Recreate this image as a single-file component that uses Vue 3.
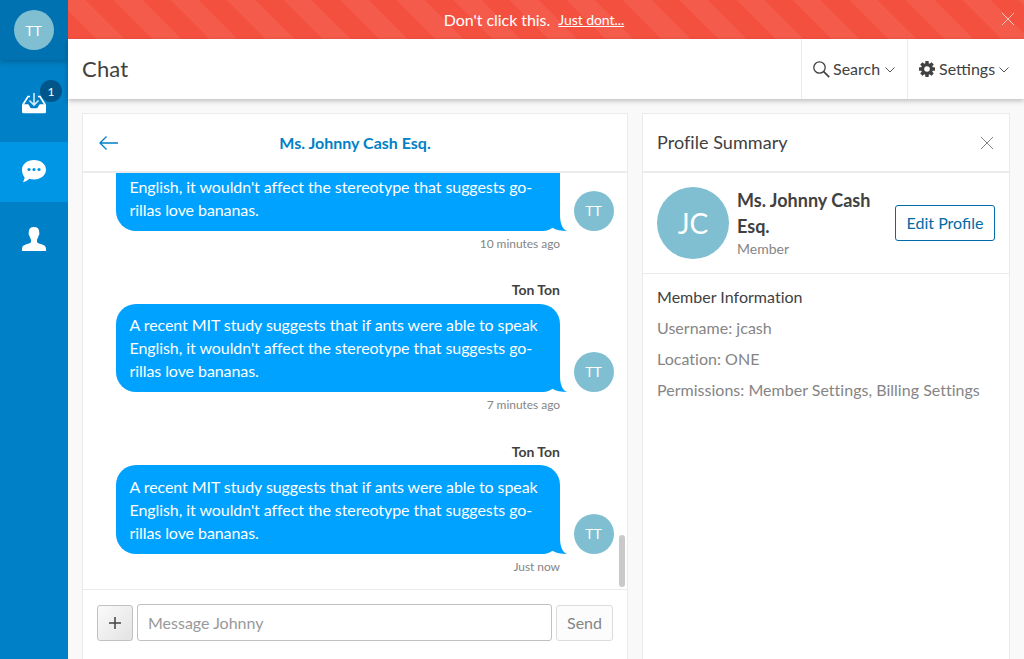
<script setup>
import { ref } from 'vue'

const body = "A recent MIT study suggests that if ants were able to speak English, it wouldn't affect the stereotype that suggests go\u00adrillas love bananas."
const messages = ref([
  { id: 1, time: '10 minutes ago' },
  { id: 2, time: '7 minutes ago' },
  { id: 3, time: 'Just now' },
])
</script>

<template>
  <div class="app">
    <nav class="sidebar">
      <div class="me"><span class="avatar">TT</span></div>
      <a class="nav inbox">
        <svg width="24" height="24" viewBox="0 0 24 24" fill="none">
          <path d="M8 4.500H6L1 12.500M16 4.500h2l5 8" stroke="#fff" stroke-width="1.700" />
          <path d="M0 12.200h6c1.200 0 1.700 4 3.500 4h5c1.800 0 2.300-4 3.500-4h6V20a1.200 1.200 0 0 1-1.200 1.200H1.200A1.200 1.200 0 0 1 0 20z" fill="#fff" />
          <path d="M12 1v11.500M7.500 8.500 12 13l4.500-4.500" stroke="#d5eaf6" stroke-width="1.600" />
        </svg>
        <span class="badge">1</span>
      </a>
      <a class="nav active">
        <svg width="24" height="24" viewBox="0 0 24 24">
          <path d="M12 0c6.700 0 12 4.200 12 9.700s-5.300 9.700-12 9.700c-1.800 0-3.300-.2-4.800-.7C5.600 20.400 3.200 21.800.8 22.200c1.100-1.400 1.800-3.300 1.700-5C.8 15 0 12.500 0 9.700 0 4.200 5.300 0 12 0z" fill="#fff" />
          <circle cx="7" cy="9.500" r="1.600" fill="#0096e6" />
          <circle cx="12" cy="9.500" r="1.600" fill="#0096e6" />
          <circle cx="17" cy="9.500" r="1.600" fill="#0096e6" />
        </svg>
      </a>
      <a class="nav person">
        <svg width="24" height="24" viewBox="0 0 24 24">
          <path d="M12 0c3.500 0 5.200 1.700 5.200 5 0 .9.300 1.100.1 2.300-.2 1.100-.8 1.200-1 2.200-.3 1.700-1.300 2.600-1.300 3.300v2c0 1.200 2 1.700 4.500 2.400 2.700.8 4.500 1.700 4.500 4.300V24H0v-2.500c0-2.600 1.800-3.500 4.500-4.300C7 16.500 9 16 9 14.800v-2c0-.7-1-1.600-1.300-3.300-.2-1-.8-1.100-1-2.200C6.500 6.100 6.800 5.900 6.800 5 6.800 1.700 8.500 0 12 0z" fill="#fff" />
        </svg>
      </a>
    </nav>

    <div class="main">
      <div class="alert">
        <span>Don't click this.</span>
        <a class="alert-link">Just dont...</a>
        <svg class="alert-close" width="12" height="12" viewBox="0 0 12 12"><path d="M0 0 12 12M12 0 0 12" stroke="#fff" stroke-opacity=".65" /></svg>
      </div>

      <header class="topbar">
        <h1>Chat</h1>
        <div class="menu search">
          <svg width="17" height="17" viewBox="0 0 17 17" fill="none" stroke="#414141"><circle cx="6.500" cy="6.500" r="5.700" stroke-width="1.300" /><path d="M10.700 10.700 16.200 16.200" stroke-width="1.700" /></svg>
          <span>Search</span>
          <svg class="chev" width="10" height="6" viewBox="0 0 10 6" fill="none"><path d="M.5.5 5 5 9.500.5" stroke="#555" /></svg>
        </div>
        <div class="menu settings">
          <svg width="16" height="16" viewBox="-8 -8 16 16">
            <g fill="#414141">
              <rect v-for="n in 4" :key="n" x="-1.700" y="-8" width="3.400" height="16" rx=".5" :transform="`rotate(${n * 45})`" />
              <circle r="6" />
            </g>
            <circle r="2.800" fill="#fff" />
          </svg>
          <span>Settings</span>
          <svg class="chev" width="10" height="6" viewBox="0 0 10 6" fill="none"><path d="M.5.5 5 5 9.500.5" stroke="#555" /></svg>
        </div>
      </header>

      <div class="content">
        <section class="card chat">
          <div class="card-head chat-head">
            <svg class="back" width="19" height="14" viewBox="0 0 19 14" fill="none" stroke="#0080c5" stroke-width="1.300"><path d="M1 7h18M7.500.5 1 7l6.500 6.500" /></svg>
            <h2>Ms. Johnny Cash Esq.</h2>
          </div>
          <div class="thread">
            <article v-for="m in messages" :key="m.id" class="message">
              <div class="author">Ton Ton</div>
              <div class="row">
                <div class="bubble">
                  {{ body }}
                  <svg class="tail" width="24" height="17" viewBox="0 0 24 17">
                    <path d="M17 0C17 8 18.500 14.500 24 17H0C4 17 7 15.500 9.500 14L17 0z" fill="#00a2ff" />
                    <path d="M0 17.500V17c4 0 7-1.500 9.500-3.300C13 15.900 18 16.900 24 17v.5z" fill="#fff" />
                  </svg>
                </div>
                <span class="avatar">TT</span>
              </div>
              <div class="time">{{ m.time }}</div>
            </article>
            <i class="scroll" />
          </div>
          <div class="composer">
            <button class="plus" aria-label="Add"><svg width="12" height="12" viewBox="0 0 12 12"><path d="M6 0v12M0 6h12" stroke="#414141" stroke-width="1.500" /></svg></button>
            <input placeholder="Message Johnny">
            <button class="send">Send</button>
          </div>
        </section>

        <aside class="card profile">
          <div class="card-head profile-head">
            <h2>Profile Summary</h2>
            <svg width="12" height="12" viewBox="0 0 12 12"><path d="M0 0 12 12M12 0 0 12" stroke="#858585" /></svg>
          </div>
          <div class="person-row">
            <span class="avatar large">JC</span>
            <div class="who">
              <h3>Ms. Johnny Cash Esq.</h3>
              <p>Member</p>
            </div>
            <button class="edit">Edit Profile</button>
          </div>
          <div class="info">
            <h4>Member Information</h4>
            <p>Username: jcash</p>
            <p>Location: ONE</p>
            <p>Permissions: Member Settings, Billing Settings</p>
          </div>
        </aside>
      </div>
    </div>
  </div>
</template>

<style>
body { background: #f9f9f9; overflow: hidden; }
</style>

<style scoped>
* { box-sizing: border-box; }
.app { display: flex; width: 1024px; height: 659px; overflow: hidden; font: 16px/23px Lato, sans-serif; color: #414141; }
h1, h2, h3, h4, p { margin: 0; font-weight: 400; }
svg { display: block; flex: none; }
button, input { font: inherit; }

.sidebar { width: 68px; background: #0080c6; flex: none; }
.me { height: 60px; display: flex; align-items: center; justify-content: center; background: #0072b1; box-shadow: 0 1px 6px rgba(0, 0, 0, .3); }
.avatar { display: flex; align-items: center; justify-content: center; flex: none; width: 40px; height: 40px; border-radius: 50%; background: #80bfd2; color: #fff; font-size: 14px; line-height: 20px; }
.me .avatar { padding: 1px 1px 0 0; }
.row .avatar { padding-right: 1px; }
.nav { position: relative; display: flex; align-items: center; justify-content: center; height: 60px; }
.inbox { margin: 14px 0 8px; }
.active { background: #0096e6; }
.person { margin-top: 7px; }
.badge { position: absolute; left: 40px; top: 6px; width: 22px; height: 22px; border-radius: 50%; background: #00558a; color: #fff; font-size: 12px; line-height: 23px; text-align: center; }

.main { flex: 1; min-width: 0; display: flex; flex-direction: column; background: #f9f9f9; }
.alert { position: relative; flex: none; display: flex; align-items: center; justify-content: center; gap: 8px; height: 39px; padding-right: 24px; color: #fff; background: repeating-linear-gradient(45deg, #f45040 0 20px, #f45b4a 20px 40px); }
.alert span { letter-spacing: -.05px; }
.alert-link { font-size: 14px; letter-spacing: -.05px; text-decoration: underline; }
.alert-close { position: absolute; right: 10px; top: 13px; }
.topbar { position: relative; flex: none; display: flex; height: 60px; background: #fff; box-shadow: 0 2px 5px rgba(0, 0, 0, .24); }
.topbar h1 { flex: 1; padding-left: 14px; font-size: 22px; line-height: 60px; letter-spacing: .2px; }
.menu { display: flex; align-items: center; border-left: 1px solid #ebebeb; padding-left: 11px; }
.search { width: 106px; }
.settings { width: 117px; }
.menu span { margin: -2px 0 0 3px; }
.settings span { margin-left: 4px; }
.chev { margin: 2px 0 0 5px; }
.settings .chev { margin-left: 4px; }

.content { flex: 1; min-height: 0; display: flex; gap: 14px; padding: 14px 14px 0; }
.card { background: #fff; border: 1px solid #ebebeb; border-bottom: 0; display: flex; flex-direction: column; }
.chat { width: 546px; }
.profile { width: 368px; }
.card-head { flex: none; height: 59px; border-bottom: 2px solid #ebebeb; display: flex; align-items: center; padding: 0 14px; }
.back { margin: 1px 0 0 2px; }
.chat-head h2 { flex: 1; margin-right: 21px; text-align: center; font-size: 16px; font-weight: 700; color: #0080c6; }
.profile-head { justify-content: space-between; padding-right: 16px; }
.profile-head svg { margin-top: 1px; }
.profile-head h2 { font-size: 18px; letter-spacing: .05px; }

.thread { position: relative; flex: none; height: 416px; overflow: hidden; display: flex; flex-direction: column; justify-content: flex-end; padding: 0 13px 11.800px 33px; }
.message { flex: none; height: 135.500px; margin-top: 26px; }
.author { width: 444px; text-align: right; font-size: 14px; font-weight: 700; line-height: 20px; margin-bottom: 3.500px; }
.row { display: flex; align-items: flex-end; gap: 14px; }
.bubble { position: relative; width: 444px; height: 88.500px; padding: 9.500px 13px 9px 13.500px; border-radius: 20px 20px 0 20px; background: #00a2ff; color: #fff; letter-spacing: -.075px; }
.tail { position: absolute; left: 427px; bottom: 0; }
.time { width: 444px; margin-top: 3px; text-align: right; font-size: 12px; line-height: 20px; letter-spacing: -.05px; color: #858585; }
.scroll { position: absolute; right: 2px; top: 362px; width: 6px; height: 52px; border-radius: 3px; background: #c9c9c9; }

.composer { display: flex; align-items: flex-end; gap: 4px; padding: 14px 14px 0; border-top: 1px solid #ebebeb; }
.plus { width: 36px; height: 36px; padding: 0; display: flex; align-items: center; justify-content: center; border: 1px solid #c1c1c1; border-radius: 3px; background: linear-gradient(135deg, #fafafa, #e3e3e3); }
.composer input { width: 415px; height: 37px; padding: 0 10px; border: 1px solid #c1c1c1; border-radius: 3px; outline: 0; background: #fff; }
.composer input::placeholder { color: #999; opacity: 1; }
.send { width: 57px; height: 36px; padding: 0 0 2px; border: 1px solid #dcdcdc; border-radius: 3px; background: #fcfcfc; color: #858585; }

.person-row { display: flex; align-items: center; height: 101px; padding: 0 14px; border-bottom: 1px solid #ebebeb; }
.large { width: 72px; height: 72px; font-size: 28px; line-height: 40px; }
.who { flex: 1; padding-left: 8px; }
.who h3 { font-size: 18px; line-height: 26px; font-weight: 700; }
.who p { font-size: 14px; line-height: 20px; color: #858585; }
.edit { width: 100px; height: 36px; padding: 0 0 2px; border: 1px solid #006ba6; border-radius: 3px; background: #fff; color: #006ba6; }
.info { padding: 11px 14px; }
.info h4, .info p { letter-spacing: .02px; }
.info p { margin-top: 8px; color: #858585; }
</style>
